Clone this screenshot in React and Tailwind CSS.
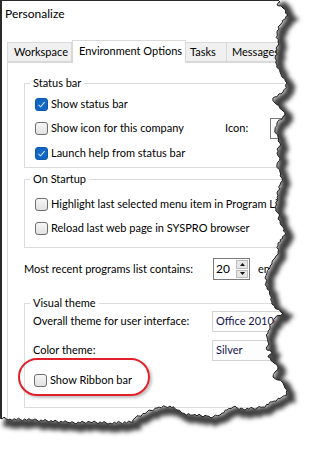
import React from "react";

const EDGE = [
  [278,0],[280,2],[277,5],[283,8],[288,15],[283,20],[280,25],[277,33],[278,42],[277,50],[275,58],[277,65],[280,72],[282,77],[287,83],[283,92],[273,98],[275,103],[282,110],[285,115],[277,123],[275,130],[278,137],[280,143],[277,153],[280,158],[277,165],[280,172],[282,178],[280,185],[277,193],[278,200],[275,207],[278,213],[280,223],[283,227],[285,235],[278,243],[278,252],[275,258],[272,262],[270,268],[267,273],[265,278],[267,287],[270,295],[272,302],[275,308],[283,313],[275,318],[270,327],[268,333],[267,337],[268,342],[267,350],[272,352],[268,357],[273,362],[278,367],[275,372],[273,377],[278,380],[283,383],[285,388],[287,395],[282,397],[272,402],[263,407],[257,408],[243,409],[233,407],[227,410],[220,415],[213,417],[207,416],[193,415],[182,413],[177,410],[170,406],[157,408],[147,412],[135,418],[133,422],[110,423],[90,422],[70,423],[67,422],[33,420],[10,419],[0,418],
];

function jag(points) {
  const out = [];
  for (let i = 0; i < points.length - 1; i++) {
    const [x1, y1] = points[i];
    const [x2, y2] = points[i + 1];
    out.push([x1, y1]);
    const n = Math.max(1, Math.floor(Math.hypot(x2 - x1, y2 - y1) / 2));
    for (let k = 1; k < n; k++) {
      const t = k / n;
      const d = ((i * 7 + k * 13) % 5) - 2;
      const nx = x1 + (x2 - x1) * t;
      const ny = y1 + (y2 - y1) * t;
      const vertical = Math.abs(y2 - y1) > Math.abs(x2 - x1);
      out.push(vertical ? [nx + d * 0.6, ny] : [nx, ny + d * 0.6]);
    }
  }
  out.push(points[points.length - 1]);
  return out;
}

const J = jag(EDGE);
const edgeD = "M" + J.map((p) => p[0].toFixed(1) + "," + p[1].toFixed(1)).join(" L");
const outsideD = edgeD + " L0,452 L312,452 L312,0 Z";

function TornOverlay() {
  return (
    <svg className="absolute inset-0 pointer-events-none" width="312" height="452" viewBox="0 0 312 452">
      <defs>
        <clipPath id="outside">
          <path d={outsideD} />
        </clipPath>
        <filter id="blur" x="-20%" y="-20%" width="140%" height="140%">
          <feGaussianBlur stdDeviation="2" />
        </filter>
      </defs>
      <path d={outsideD} fill="#ffffff" />
      <g clipPath="url(#outside)">
        <path d={edgeD} transform="translate(4,4)" fill="none" stroke="#404040" strokeWidth="8" filter="url(#blur)" />
      </g>
      <path d={edgeD} fill="none" stroke="#1e1e1e" strokeWidth="1" />
    </svg>
  );
}

function Check({ checked }) {
  if (checked) {
    return (
      <span className="w-[13px] h-[13px] shrink-0 rounded-[3px] bg-[#1266c4] border border-[#0d58ab] flex items-center justify-center">
        <svg width="9" height="9" viewBox="0 0 9 9">
          <polyline points="1.5,4.8 3.6,6.8 7.6,2.2" fill="none" stroke="#cfe3fa" strokeWidth="1.1" />
        </svg>
      </span>
    );
  }
  return (
    <span className="w-[13px] h-[13px] shrink-0 rounded-[3px] border border-[#6e6e6e] bg-gradient-to-b from-[#f6f6f6] to-[#e2e2e2]" />
  );
}

function Row({ checked, children }) {
  return (
    <div className="flex items-center h-[20px] gap-[3px] whitespace-nowrap">
      <Check checked={checked} />
      <span>{children}</span>
    </div>
  );
}

function Group({ title, className, children }) {
  return (
    <div className={"relative border border-[#dcdcdc] w-[300px] " + className}>
      <span className="absolute left-[5px] -top-[9px] px-[3px] bg-white leading-[16px] whitespace-nowrap">{title}</span>
      {children}
    </div>
  );
}

function Combo({ children }) {
  return (
    <div className="w-[80px] h-[21px] shrink-0 border border-[#d2d2d2] bg-[#fdfdfd] px-[3px] flex items-center text-[#141450] whitespace-nowrap">
      {children}
    </div>
  );
}

export default function App() {
  return (
    <div
      className="relative w-[312px] h-[452px] overflow-hidden bg-white text-[11px] text-black"
      style={{ fontFamily: '"Segoe UI", Lato, sans-serif' }}
    >
      <div className="w-[400px] h-[440px] border-l-2 border-t border-[#2a2a2a] bg-white">
        <div className="h-[26px] pl-[3px] pt-[4px] leading-[17px] text-[12px]">Personalize</div>
        <div className="flex items-end pl-[5px] h-[35px] whitespace-nowrap">
          <div className="w-[65px] h-[20px] shrink-0 border border-[#d9d9d9] bg-[#f0f0f0] pl-[6px] flex items-center">Workspace</div>
          <div className="w-[114px] h-[23px] shrink-0 -mb-px border border-b-0 border-[#d9d9d9] bg-white pl-[6px] flex items-center pb-[2px] relative z-10">Environment Options</div>
          <div className="w-[41px] h-[20px] shrink-0 border border-l-0 border-[#d9d9d9] bg-[#f0f0f0] pl-[4px] flex items-center">Tasks</div>
          <div className="w-[80px] h-[20px] shrink-0 border border-l-0 border-[#d9d9d9] bg-[#f0f0f0] pl-[5px] flex items-center">Messages</div>
        </div>
        <div className="ml-[5px] border border-[#d9d9d9] bg-white h-[400px] pl-[16px] pt-[20px]">
          <Group title="Status bar" className="pt-[10px] pb-[4px] pl-[10px]">
            <div className="flex flex-col gap-[4px]">
              <Row checked>Show status bar</Row>
              <div className="flex items-center">
                <div className="w-[190px] shrink-0">
                  <Row>Show icon for this company</Row>
                </div>
                <span className="w-[45px] shrink-0">Icon:</span>
                <span className="w-[30px] h-[21px] shrink-0 border border-[#7a7a7a] bg-white" />
              </div>
              <Row checked>Launch help from status bar</Row>
            </div>
          </Group>
          <Group title="On Startup" className="mt-[11px] pt-[14px] pb-[9px] pl-[10px]">
            <div className="flex flex-col gap-[4px]">
              <Row>Highlight last selected menu item in Program List</Row>
              <Row>Reload last web page in SYSPRO browser</Row>
            </div>
          </Group>
          <div className="mt-[10px] flex items-center h-[22px] whitespace-nowrap">
            <span className="w-[189px] shrink-0">Most recent programs list contains:</span>
            <div className="w-[37px] h-[22px] shrink-0 border border-[#7a7a7a] bg-white flex">
              <span className="flex-1 pl-[2px] leading-[20px] text-[12px]">20</span>
              <div className="w-[14px] flex flex-col gap-[1px] p-[1px]">
                <div className="flex-1 bg-[#e6e6e6] border border-[#bcbcbc] flex items-center justify-center">
                  <svg width="5" height="3" viewBox="0 0 5 3"><polygon points="0,3 5,3 2.5,0" fill="#111" /></svg>
                </div>
                <div className="flex-1 bg-[#e6e6e6] border border-[#bcbcbc] flex items-center justify-center">
                  <svg width="5" height="3" viewBox="0 0 5 3"><polygon points="0,0 5,0 2.5,3" fill="#111" /></svg>
                </div>
              </div>
            </div>
            <span className="ml-[8px]">entries</span>
          </div>
          <Group title="Visual theme" className="mt-[23px] pt-[7px] pb-[17px] pl-[8px]">
            <div className="flex flex-col">
              <div className="flex items-center h-[21px] whitespace-nowrap">
                <span className="w-[179px] shrink-0">Overall theme for user interface:</span>
                <Combo>Office 2010</Combo>
              </div>
              <div className="flex items-center h-[21px] mt-[8px] whitespace-nowrap">
                <span className="w-[179px] shrink-0">Color theme:</span>
                <Combo>Silver</Combo>
              </div>
              <div className="mt-[9px] ml-[1px]">
                <Row>Show Ribbon bar</Row>
              </div>
            </div>
          </Group>
        </div>
      </div>
      <div className="absolute left-[18px] top-[358px] w-[132px] h-[38px] border-2 border-[#e2202a] rounded-[19px] shadow-[2px_2px_3px_rgba(0,0,0,0.25)]" />
      <TornOverlay />
    </div>
  );
}
